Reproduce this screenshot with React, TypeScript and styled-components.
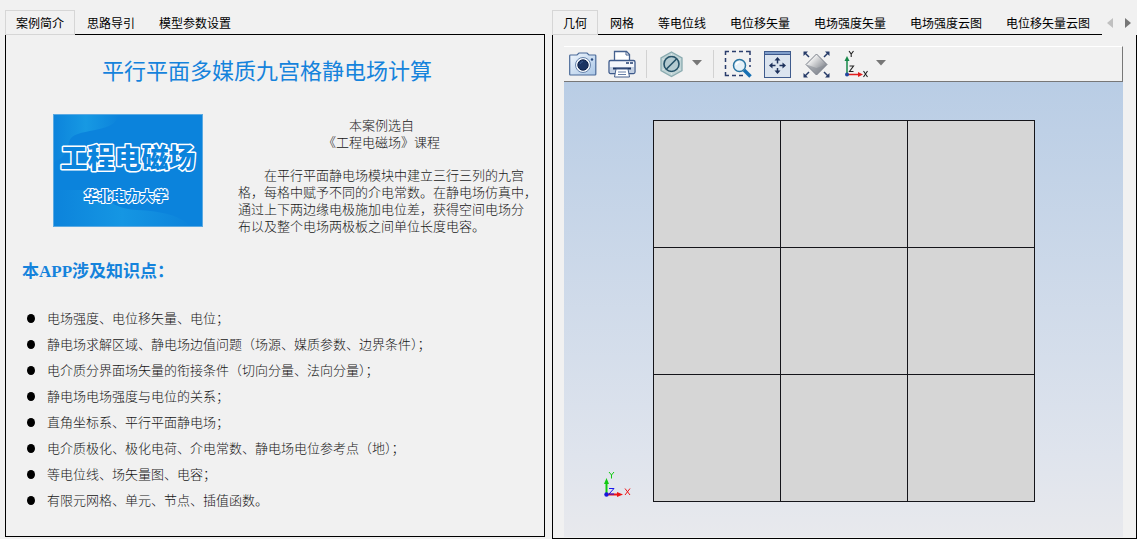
import React from "react";
import styled, { createGlobalStyle } from "styled-components";

const GlobalStyle = createGlobalStyle`
  *, *::before, *::after { box-sizing: border-box; }
  body {
    margin: 0;
    background: #f1f1f1;
    color: #000;
    font-family: "Noto Sans CJK SC", "Liberation Sans", sans-serif;
    font-size: 12px;
  }
  h1, h2, p, ul { margin: 0; padding: 0; }
`;

const Page = styled.main`
  display: grid;
  grid-template-columns: minmax(0, 540fr) minmax(0, 585fr);
  column-gap: 7px;
  min-height: 100vh;
  padding: 10px 0 0 5px;
`;

const TabWidget = styled.section<{ $bottom?: number }>`
  display: flex;
  flex-direction: column;
  margin-bottom: ${(p) => p.$bottom ?? 0}px;
`;

const TabBar = styled.div`
  display: flex;
  height: 25px;
  white-space: nowrap;
`;

const Tab = styled.button<{ $active?: boolean }>`
  flex: none;
  margin: 0;
  padding: ${(p) => (p.$active ? "0 10px" : "1px 12px 0")};
  border: ${(p) => (p.$active ? "1px solid #d6d6d6" : "0")};
  border-bottom: 1px solid ${(p) => (p.$active ? "#d6d6d6" : "#000")};
  background: none;
  color: #000;
  font: inherit;
  line-height: 22px;
`;

const TabLine = styled.div`
  flex: 1;
  border-bottom: 1px solid #000;
`;

const TabScroll = styled.div`
  display: flex;
  flex: 1;
  align-items: center;
  gap: 10px;
  padding-left: 5px;
`;

const ScrollButton = styled.button`
  display: flex;
  padding: 0;
  border: 0;
  background: none;
`;

const Pane = styled.div`
  display: flex;
  flex: 1;
  flex-direction: column;
  border: 1px solid #000;
  border-top: 0;
`;

const Notes = styled(Pane)`
  padding: 18px 0 20px 16px;
  color: #161616;
  font-size: 13px;
  font-weight: 300;
`;

const Title = styled.h1`
  padding-right: 32px;
  color: #1583dc;
  font-size: 22px;
  font-weight: 400;
  line-height: 32px;
  text-align: center;
`;

const Intro = styled.div`
  display: flex;
  gap: 35px;
  margin-top: 29px;
  padding-left: 31px;
`;

const Cover = styled.svg`
  flex: none;
  width: 150px;
  height: 113px;
`;

const IntroText = styled.div`
  flex: 1;
  min-width: 0;
  padding-top: 2px;
  line-height: 17px;
  white-space: pre;
`;

const Source = styled.p`
  padding-right: 19px;
  text-align: center;
`;

const Summary = styled.p`
  margin-top: 16px;
  text-indent: 26px;
`;

const Heading = styled.h2`
  margin-top: 26px;
  color: #1583dc;
  font-family: "Liberation Serif", "Noto Sans CJK SC", serif;
  font-size: 17px;
  font-weight: 700;
  line-height: 24px;
`;

const Points = styled.ul`
  margin-top: 21px;
  list-style: none;
`;

const Point = styled.li`
  display: flex;
  align-items: center;
  gap: 12px;
  padding-left: 5px;
  line-height: 26px;

  &::before {
    content: "";
    width: 8px;
    height: 9px;
    border-radius: 50%;
    background: #000;
  }
`;

const ModelPane = styled(Pane)`
  padding: 11px 13px 1px 11px;
`;

const Toolbar = styled.div`
  display: flex;
  align-items: center;
  gap: 11px;
  height: 36px;
  padding-left: 5px;
  border: 1px solid #777;
  border-top-color: #fff;
  border-left: 0;
`;

const ToolButton = styled.button`
  display: flex;
  align-items: center;
  gap: 6px;
  padding: 0;
  border: 0;
  background: none;
`;

const Divider = styled.span`
  width: 1px;
  height: 28px;
  margin: 0 -1px;
  background: #d2d2d2;
`;

const Viewport = styled.div`
  position: relative;
  display: flex;
  flex: 1;
  align-items: center;
  justify-content: center;
  padding-top: 2px;
  background: linear-gradient(#b9cde5, #dfe4ed 82%, #e8e9ed);
`;

const NineGrid = styled.div`
  display: grid;
  grid-template-columns: repeat(3, 1fr);
  gap: 1px;
  width: 382px;
  max-width: 100%;
  aspect-ratio: 1;
  border: 1px solid #15151a;
  background: #15151a;
`;

const Cell = styled.div`
  background: #d6d6d6;
`;

const Triad = styled.svg`
  position: absolute;
  bottom: 37px;
  left: 36px;
`;

const infoTabs = ["案例简介", "思路导引", "模型参数设置"];
const viewTabs = [
  "几何",
  "网格",
  "等电位线",
  "电位移矢量",
  "电场强度矢量",
  "电场强度云图",
  "电位移矢量云图",
];

// Full-width punctuation is written as escapes so that it is not mistaken for ASCII.
const summary = [
  "在平行平面静电场模块中建立三行三列的九宫",
  "格\uFF0C每格中赋予不同的介电常数。在静电场仿真中\uFF0C",
  "通过上下两边缘电极施加电位差\uFF0C获得空间电场分",
  "布以及整个电场两极板之间单位长度电容。",
].join("\n");

const points = [
  "电场强度、电位移矢量、电位\uFF1B",
  "静电场求解区域、静电场边值问题\uFF08场源、媒质参数、边界条件\uFF09\uFF1B",
  "电介质分界面场矢量的衔接条件\uFF08切向分量、法向分量\uFF09\uFF1B",
  "静电场电场强度与电位的关系\uFF1B",
  "直角坐标系、平行平面静电场\uFF1B",
  "电介质极化、极化电荷、介电常数、静电场电位参考点\uFF08地\uFF09\uFF1B",
  "等电位线、场矢量图、电容\uFF1B",
  "有限元网格、单元、节点、插值函数。",
];

function Tabs({ labels }: { labels: string[] }) {
  return (
    <>
      {labels.map((label, i) => (
        <Tab key={label} role="tab" aria-selected={i === 0} $active={i === 0}>
          {label}
        </Tab>
      ))}
    </>
  );
}

const DropArrow = () => (
  <svg width="12" height="10" viewBox="0 0 12 10" aria-hidden="true">
    <path d="M1 1h10L6 6.500z" fill="#777" />
  </svg>
);

function Icon({ children }: { children: React.ReactNode }) {
  return (
    <svg width="28" height="28" viewBox="0 0 28 28" fill="none" aria-hidden="true">
      {children}
    </svg>
  );
}

const CameraIcon = () => (
  <Icon>
    <defs>
      <linearGradient id="camera-body" x2="1" y2="1">
        <stop stopColor="#f1f7fd" />
        <stop offset="1" stopColor="#a9c6e6" />
      </linearGradient>
    </defs>
    <path
      d="M1.500 5h6.500l2-2h8l2 2h6q.8 0 .8.8v18.400q0 .8-.8.8H1.500q-.8 0-.8-.8V5.800q0-.8.8-.8z"
      fill="url(#camera-body)"
      stroke="#4a6a99"
      strokeWidth="1.200"
    />
    <circle cx="14" cy="15" r="7.500" fill="#f6fafe" stroke="#6783ab" />
    <circle cx="14" cy="15" r="5.200" fill="#1b3462" stroke="#0f2149" />
    <path d="M11 14a3.500 3.500 0 0 1 3-2.500" stroke="#3d5c90" />
    <circle cx="23" cy="9.500" r="1.200" fill="#294b80" />
  </Icon>
);

const PrinterIcon = () => (
  <Icon>
    <path d="M6.500 11V1.500h12l3 3V11" fill="#fff" stroke="#46618e" strokeWidth="1.300" />
    <path d="M18 1.500V5h3.500" stroke="#46618e" />
    <rect x="1" y="10.500" width="26" height="13" rx="1.500" fill="#f3f6fb" stroke="#3d5a8b" strokeWidth="1.300" />
    <path d="M2 17h24v6H2z" fill="#c3d0e2" />
    <path d="M18 13h3m1 0h3" stroke="#223e70" strokeWidth="1.400" />
    <path d="M5 18.500h18" stroke="#1e3766" strokeWidth="2" />
    <path d="M8 19h12l1.500 8h-15z" fill="#fff" stroke="#46618e" />
    <path d="M10 22h8M10 24.500h8" stroke="#667fa6" />
  </Icon>
);

const SectionIcon = () => (
  <Icon>
    <path d="M14.500 2 25 8v12.500l-10.500 6L4 20.500V8z" fill="#c0d4d6" stroke="#8aabb0" strokeWidth="1.300" />
    <path d="M14.500 4v20.500M5.500 9l18 11M23.500 9l-18 11" stroke="#dbe7e8" />
    <circle cx="14.500" cy="14" r="7.500" fill="#b3cad0" stroke="#245167" strokeWidth="1.600" />
    <path d="m9.500 19 10-10" stroke="#245167" strokeWidth="1.600" />
  </Icon>
);

const ZoomBoxIcon = () => (
  <Icon>
    <path
      d="M1.500 5V1.500H5m3 0h4m3 0h4m3 0h4V5m0 3v4m0 3v2M1.500 8v4m0 3v4m0 3v3.500H5m3 0h4m3 0h4"
      stroke="#2a3d6c"
      strokeWidth="1.500"
    />
    <path d="m20 20 6.500 6.500" stroke="#1670b4" strokeWidth="3.500" />
    <circle cx="15.500" cy="15.500" r="6" fill="#e5f1f8" stroke="#2874a2" strokeWidth="1.500" />
    <path d="M12 15a4 4 0 0 1 3.500-3" stroke="#fff" strokeWidth="1.500" />
  </Icon>
);

const FitIcon = () => (
  <Icon>
    <rect x="1.500" y="1.500" width="26" height="26" fill="#dbe4ef" stroke="#3f5b8d" />
    <path d="M2 2h25v2H2z" fill="#7f9ecb" />
    <path d="M2 4.500h25" stroke="#3c578b" />
    <path d="M14.500 10v3.500m0 4.500v3.500M9 15.500h3.500m4 0H20" stroke="#1d315c" strokeWidth="1.500" />
    <path d="m14.500 7 3 3.500h-6zM14.500 24l-3-3.500h6zM6 15.500l3.500-3v6zM23 15.500l-3.500-3v6z" fill="#1d315c" />
  </Icon>
);

const RotateIcon = () => (
  <Icon>
    <defs>
      <linearGradient id="diamond" x1="0" y1="0" x2="1" y2="1">
        <stop offset=".25" stopColor="#f2f2f2" />
        <stop offset=".8" stopColor="#80848c" />
      </linearGradient>
    </defs>
    <path d="M14.500 4 25 14.500 14.500 25 4 14.500z" fill="url(#diamond)" stroke="#787d88" />
    <path d="M4.500 14.500 14.500 18l10-3.500L14.500 25z" fill="#8b8f97" opacity=".6" />
    <path d="m3 3 4 4m19-4-4 4M3 26l4-4m19 4-4-4" stroke="#263b68" strokeWidth="1.500" />
    <path d="M1.500 6V1.500H6zM27.500 6V1.500H23zM1.500 23v4.500H6zM27.500 23v4.500H23z" fill="#263b68" />
  </Icon>
);

const AxesIcon = () => (
  <Icon>
    <path d="M6 24V9" stroke="#168848" strokeWidth="1.500" />
    <path d="m6 6-2.500 5h5z" fill="#168848" />
    <path d="M6 24.500h12" stroke="#e21f1f" strokeWidth="1.500" />
    <path d="m22 24.500-5-2.500v5z" fill="#e21f1f" />
    <circle cx="6" cy="24.500" r="2" fill="#2347a0" />
    <path d="m8 1 2.200 3L12.500 1M10.200 4v3M8.500 16h4l-4 5.500h4M22.500 21l4 6m0-6-4 6" stroke="#222" strokeWidth="1.100" />
  </Icon>
);

function CoverArt() {
  return (
    <Cover viewBox="0 0 150 113" role="img" aria-label="工程电磁场 华北电力大学">
      <defs>
        <linearGradient id="wave-top">
          <stop stopColor="#0c83db" />
          <stop offset=".5" stopColor="#1799e3" />
          <stop offset="1" stopColor="#0c83db" />
        </linearGradient>
        <linearGradient id="wave-bottom">
          <stop stopColor="#0c83db" />
          <stop offset=".5" stopColor="#1596e3" />
          <stop offset="1" stopColor="#0c83db" />
        </linearGradient>
      </defs>
      <rect width="150" height="113" fill="#0b83dc" />
      <path d="M0 0h66c-4 22-46 12-50 28C12 47 4 44 0 50z" fill="url(#wave-top)" />
      <path d="M0 76h30c26 0 20 18 54 20 25 1 45 6 54 17H0z" fill="url(#wave-bottom)" />
      <rect x=".5" y=".5" width="149" height="112" fill="none" stroke="#5caae2" />
      <g
        fill="#0b83dc"
        stroke="#fff"
        strokeLinejoin="round"
        paintOrder="stroke"
        fontFamily="'Noto Sans CJK SC', sans-serif"
        fontWeight="900"
        textAnchor="middle"
      >
        <text x="75" y="54" fontSize="27" strokeWidth="3">工程电磁场</text>
        <text x="73" y="87" fontSize="14" strokeWidth="2">华北电力大学</text>
      </g>
    </Cover>
  );
}

export default function App() {
  return (
    <>
      <GlobalStyle />
      <Page>
        <TabWidget $bottom={2}>
          <TabBar role="tablist">
            <Tabs labels={infoTabs} />
            <TabLine />
          </TabBar>
          <Notes>
            <Title>平行平面多媒质九宫格静电场计算</Title>
            <Intro>
              <CoverArt />
              <IntroText>
                <Source>{"本案例选自\n《工程电磁场》课程"}</Source>
                <Summary>{summary}</Summary>
              </IntroText>
            </Intro>
            <Heading>{"本APP涉及知识点\uFF1A"}</Heading>
            <Points>
              {points.map((text) => (
                <Point key={text}>{text}</Point>
              ))}
            </Points>
          </Notes>
        </TabWidget>

        <TabWidget>
          <TabBar role="tablist">
            <Tabs labels={viewTabs} />
            <TabScroll>
              <ScrollButton aria-label="向左滚动">
                <svg width="7" height="10" viewBox="0 0 7 10">
                  <path d="M6 0v10L0 5z" fill="#c0c0c0" />
                </svg>
              </ScrollButton>
              <ScrollButton aria-label="向右滚动">
                <svg width="7" height="10" viewBox="0 0 7 10">
                  <path d="M1 0v10l6-5z" fill="#777" />
                </svg>
              </ScrollButton>
            </TabScroll>
          </TabBar>
          <ModelPane>
            <Toolbar role="toolbar">
              <ToolButton aria-label="截图"><CameraIcon /></ToolButton>
              <ToolButton aria-label="打印"><PrinterIcon /></ToolButton>
              <Divider />
              <ToolButton aria-label="剖切"><SectionIcon /><DropArrow /></ToolButton>
              <Divider />
              <ToolButton aria-label="框选缩放"><ZoomBoxIcon /></ToolButton>
              <ToolButton aria-label="适合窗口"><FitIcon /></ToolButton>
              <ToolButton aria-label="旋转"><RotateIcon /></ToolButton>
              <ToolButton aria-label="视图方向"><AxesIcon /><DropArrow /></ToolButton>
            </Toolbar>
            <Viewport>
              <NineGrid>
                {Array.from({ length: 9 }, (_, i) => (
                  <Cell key={i} />
                ))}
              </NineGrid>
              <Triad width="34" height="30" viewBox="0 0 34 30" fill="none" aria-hidden="true">
                <path d="M6.500 24V12" stroke="#12c912" strokeWidth="2" />
                <path d="m6.500 8-2.500 6h5z" fill="#12c912" />
                <path d="M7 24.500h10" stroke="#ee1515" strokeWidth="2" />
                <path d="m23 24.500-6-2.500v5z" fill="#ee1515" />
                <circle cx="6.500" cy="24.500" r="2.200" fill="#1717dc" />
                <path d="m9 2 2.500 3L14 2m-2.500 3v3.500" stroke="#12c912" />
                <path d="M9 18.500h5l-5 5.500h5" stroke="#1717ee" />
                <path d="m25 18.500 5 6.500m0-6.500L25 25" stroke="#ee1515" />
              </Triad>
            </Viewport>
          </ModelPane>
        </TabWidget>
      </Page>
    </>
  );
}
